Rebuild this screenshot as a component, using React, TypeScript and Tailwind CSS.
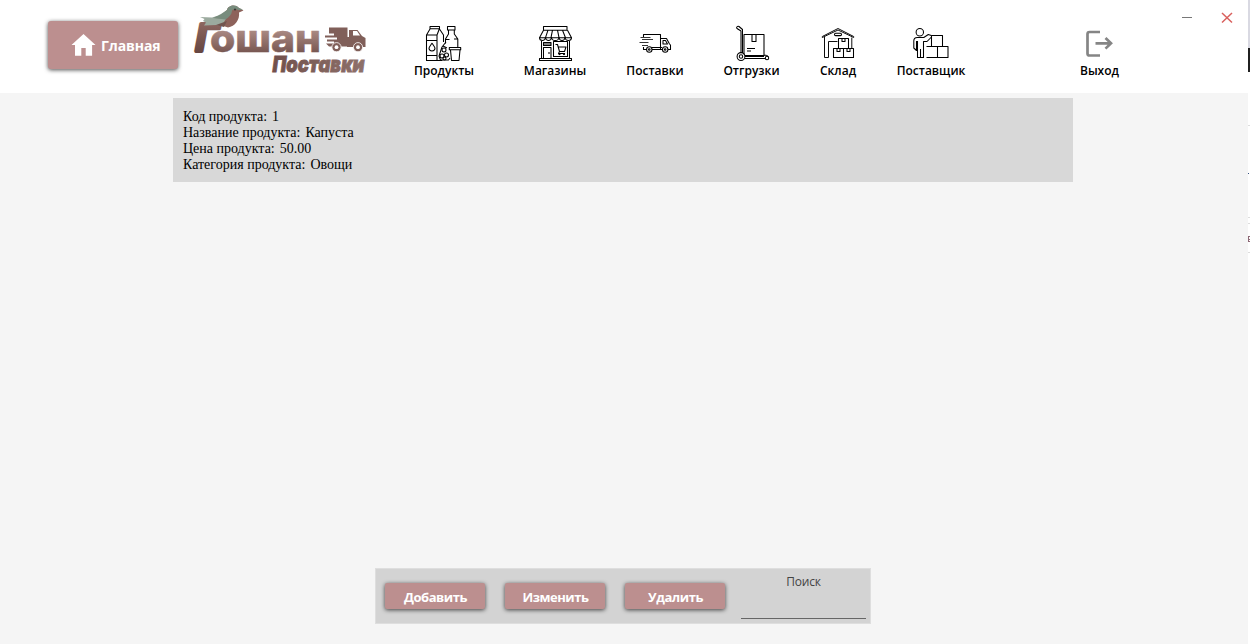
import React from "react";

type IconProps = { children: React.ReactNode };

function LineIcon({ children }: IconProps) {
  return (
    <svg className="h-10 w-10 shrink-0" viewBox="0 0 40 40" fill="none" stroke="#000" strokeWidth="1.05" strokeLinejoin="round">
      {children}
    </svg>
  );
}

const ProductsIcon = () => (
  <LineIcon>
    <path d="M6 3.5h9.5v2.3H6zM6 6L2.5 12v25.5h10.500V12H2.500M15.300 6l-2.300 6v25.500h5.300M15.500 6l4 6v7M2.500 17.500h10.500M2.500 32.500h10.500" />
    <path d="M8 20.300c-1.700 2.500-3 3.600-3 5a3 2.600 0 0 0 6 0c0-1.400-1.300-2.500-3-5z" />
    <path d="M23.500 3.500h7.500v3.500h-7.500zM24.500 7v4l-3 5v4.500M30.300 7v4l3.500 5v8M21.500 16.500h4M30 16h4" />
    <path d="M25.300 24.500h11.400v2.300H25.300zM26.500 27l1 10.500h7.500l1-10.500" />
    <path d="M22 19l-4 5-3 9 1.500 4h8l1.500-2M19 23l4 2" />
    <circle cx="20" cy="27" r="2" /><circle cx="18" cy="33" r="2" /><circle cx="22.500" cy="32" r="2" /><circle cx="20.500" cy="35.500" r="1.500" />
  </LineIcon>
);

const ShopIcon = () => (
  <LineIcon>
    <path d="M8.500 3.500h23.500v3.700H8.500zM8.500 7.200l-4 7.500h32l-4-7.500M13 7.200l-2.500 7.500M17.500 7.200l-1.500 7.500M22.500 7.200l1.500 7.500M27.500 7.200l3 7.500" />
    <path d="M4.500 14.500c0 4 5.500 4 6 0 .5 4 5.500 4 6 0 .5 4 7 4 7.500 0 .5 4 5.500 4 6 0 .5 4 6.500 4 6.500 0" />
    <path d="M6.500 18v17.500M34.500 18v17.500M4.500 35.500h32v2h-32zM8.500 19.500h7.500v3h-7.500zM8.500 21h7.500M8.500 24.500h7.500v11h-7.500zM18.500 18.500h14v15h-14z" />
    <path d="M20.500 21.500h2l2 7h5l1.500-4.500h-7.500M24.500 28.500l-1 2h6.500M14 29v2" />
    <circle cx="24.500" cy="31" r=".6" /><circle cx="29" cy="31" r=".6" />
  </LineIcon>
);

const TruckIcon = () => (
  <LineIcon>
    <path d="M8.500 14v-2.500h17v15H17M12 26.500H8.500V24M25.500 15.500h6l3 5.500 1 1v4.500h-2.500M25.500 26.500h2M28 17.500h2.500l2 3.500H28zM17 24.500h10" />
    <path d="M5.500 14.500h10M7 16.500h11M4.500 19.500h9M7 22.500h6" strokeWidth=".8" />
    <circle cx="14.300" cy="26.500" r="2.700" /><circle cx="14.300" cy="26.500" r=".8" />
    <circle cx="30.200" cy="26.500" r="2.700" /><circle cx="30.200" cy="26.500" r=".8" />
  </LineIcon>
);

const HandTruckIcon = () => (
  <LineIcon>
    <path d="M9 30V8L5 5.500c-1-1 .5-3 2-2l3.500 3V30M12 31.500v-20h20v21H13M20 11.500v7h4v-7M15 25.500h8M15 28h4M13 33.500h19M13 35.500h20M32 32c2 0 4 0 4 2" />
    <circle cx="9" cy="33.500" r="3.900" /><circle cx="9" cy="33.500" r="1.700" /><circle cx="35" cy="35" r="1.700" />
  </LineIcon>
);

const WarehouseIcon = () => (
  <LineIcon>
    <path d="M4.300 14.500v-1L20 5.500l15.700 8v1M4.300 14.500L20 7l15.700 7.500M6.500 14v20.500h4V18.500h9M33.800 14.500V25" strokeWidth=".95" />
    <rect x="16.500" y="10.300" width="7" height="2.300" rx="1.100" />
    <path d="M20.500 15.500h10v10h-10zM15.500 25.500h10v9h-10zM25.500 25.500h10v9h-10zM24 15.500v3h3v-3M19 25.500v3h3v-3M29 25.500v3h3v-3" />
  </LineIcon>
);

const SupplierIcon = () => (
  <LineIcon>
    <circle cx="8.800" cy="9.200" r="3.700" />
    <path d="M5.500 18v9.500l-2.700-2.500v-7c0-2.500 1-3.500 3.500-3.500h6.500l4.500-3 3 1M20.500 14l-4.500 4.500h-3.500V34.500h-6V18M9.500 26v8.500" />
    <path d="M20.500 12.500h11v11h-11zM15.500 23.500h11v11h-11M26.500 23.500h10.500v11H26.500z" />
  </LineIcon>
);

const nav = [
  { label: "Продукты", icon: ProductsIcon, width: "w-[110px]" },
  { label: "Магазины", icon: ShopIcon, width: "w-[112px]" },
  { label: "Поставки", icon: TruckIcon, width: "w-[88px]" },
  { label: "Отгрузки", icon: HandTruckIcon, width: "w-[105px]" },
  { label: "Склад", icon: WarehouseIcon, width: "w-[68px]" },
  { label: "Поставщик", icon: SupplierIcon, width: "w-[118px]" },
];

function Logo() {
  return (
    <svg className="ml-[15px] h-[78px] w-[176px] shrink-0" viewBox="0 0 176 78">
      <defs>
        <linearGradient id="letters" gradientUnits="userSpaceOnUse" x1="0" y1="28" x2="0" y2="54">
          <stop offset="0" stopColor="#b09089" />
          <stop offset="1" stopColor="#74534e" />
        </linearGradient>
        <linearGradient id="initial" gradientUnits="userSpaceOnUse" x1="0" y1="22" x2="0" y2="54">
          <stop offset="0" stopColor="#8d6761" />
          <stop offset="1" stopColor="#654540" />
        </linearGradient>
        <linearGradient id="subtitle" gradientUnits="userSpaceOnUse" x1="79" y1="0" x2="172" y2="0">
          <stop offset="0" stopColor="#71504b" />
          <stop offset="1" stopColor="#8e716b" />
        </linearGradient>
      </defs>
      <g fontFamily="Inter, sans-serif" fontWeight="800">
        <text x="2.500" y="51" fill="url(#initial)" fontFamily="Liberation Sans, sans-serif" fontWeight="700" fontStyle="italic" fontSize="38" textLength="23" lengthAdjust="spacingAndGlyphs" stroke="url(#initial)" strokeWidth="4" strokeLinejoin="round">Г</text>
        <text x="17" y="52" fill="url(#letters)" fontSize="38" textLength="111" lengthAdjust="spacingAndGlyphs" stroke="url(#letters)" strokeWidth=".5">ошан</text>
        <text x="79.500" y="71.500" fill="url(#subtitle)" fontSize="22" fontWeight="900" fontStyle="italic" textLength="92" lengthAdjust="spacingAndGlyphs" stroke="url(#subtitle)" strokeWidth=".9">Поставки</text>
      </g>
      <path d="M7 17l12 .5 5-1.500 11 4-2 6-10-1-12 .5 2-3-3-1.500 1.500-2z" fill="#9baa9e" />
      <path d="M22 18l6-3 6-5c1-5 9-6 12-2l4.500 2.500L46 12.500c1 7-4 14-11 15l-6-2 4-7z" fill="#8d625b" />
      <path d="M20 18l8-4 6-4c1-5 9-6 12-2l4 1.500-5 .8c-2-2-5-1.500-6 .7-.500 4-3 6-6.500 8.500z" fill="#788c7d" />
      <path d="M23 25l11-4-3 6z" fill="#71544e" />
      <circle cx="42" cy="9.500" r=".9" fill="#27342d" />
      <g fill="#805f59">
        <path d="M136 27.500h18.500v19H136l-3-3h8v-2h-7v-2h10v-2h-12v-2h9v-2h-5z" />
        <path d="M156 30h8.500l4.500 6 3.500 2v9H154V37h2z" />
        <path d="M160 31h4l3 4.500H160z" fill="#fff" />
        <circle cx="143.500" cy="47.200" r="4.600" stroke="#fff" strokeWidth=".8" /><circle cx="165" cy="47.200" r="4.600" stroke="#fff" strokeWidth=".8" />
        <circle cx="143.500" cy="47.200" r="1.900" fill="#fff" /><circle cx="165" cy="47.200" r="1.900" fill="#fff" />
      </g>
    </svg>
  );
}

function Header() {
  return (
    <header className="flex h-[93px] bg-white">
      <button className="mt-[21px] ml-12 flex h-12 w-[130px] shrink-0 items-center rounded-[3px] bg-[#bc8f8f] pl-[23px] text-[14px] font-bold text-white shadow-[0_1px_4px_0px_rgba(0,0,0,0.7)]">
        <svg className="mr-[5px] h-6 w-[25px]" viewBox="0 0 25 24" fill="#fff">
          <path d="M12.500 1L24.500 12h-3.400v10.700h-6.400V15h-4.400v7.700H4V12H.5z" />
        </svg>
        <span className="tracking-[-0.1px]">Главная</span>
      </button>
      <Logo />
      <nav className="ml-5 flex">
        {nav.map(({ label, icon: Icon, width }) => (
          <a key={label} className={`flex shrink-0 flex-col items-center pt-[23px] ${width}`}>
            <Icon />
            <span className="text-[12px] leading-4 font-semibold whitespace-nowrap">{label}</span>
          </a>
        ))}
      </nav>
      <a className="ml-[69px] flex w-[81px] flex-col items-center pt-[23px]">
        <svg className="h-10 w-10" viewBox="0 0 40 40" fill="none" stroke="#858585" strokeWidth="2.700">
          <path d="M20 9H9.500q-2 0-2 2v19.500q0 2 2 2H20M15.500 20.300h15.500M25.500 15l5.500 5.300-5.500 5.300" />
        </svg>
        <span className="text-[12px] leading-4 font-semibold">Выход</span>
      </a>
      <div className="ml-auto flex items-start pt-3 pr-[15px]">
        <svg className="h-3 w-3" viewBox="0 0 12 12" stroke="#777"><path d="M1 5.500h10" /></svg>
        <svg className="ml-7 h-3 w-3" viewBox="0 0 12 12" stroke="#d9605d" strokeWidth="1.500"><path d="M1 1l10 9.500M11 1L1 10.500" /></svg>
      </div>
    </header>
  );
}

const product = [
  ["Код продукта:", "1"],
  ["Название продукта:", "Капуста"],
  ["Цена продукта:", "50.00"],
  ["Категория продукта:", "Овощи"],
];

export default function App() {
  return (
    <div className="flex h-[644px] w-[1250px] overflow-hidden bg-[#f5f5f5] font-['Open_Sans',sans-serif] text-black">
      <div className="flex w-[1248px] shrink-0 flex-col">
        <Header />
        <section className="mt-[5px] ml-[173px] h-[84px] w-[900px] bg-[#d8d8d8] pt-[11px] pl-[10px] font-['Liberation_Serif',serif] text-[14px] leading-4">
          {product.map(([key, value]) => (
            <div key={key} className="flex gap-[5px]"><span>{key}</span><span>{value}</span></div>
          ))}
        </section>
        <footer className="mt-auto mb-5 ml-[375px] flex h-14 w-[496px] border border-[#dedede] bg-[#d3d3d3] pl-[9px]">
          <div className="flex gap-5 pt-[14px]">
            {["Добавить", "Изменить", "Удалить"].map((label) => (
              <button key={label} className="h-[26px] w-[100px] rounded-[2px] bg-[#bc8f8f] pt-px pl-px text-[13px] leading-[26px] font-bold tracking-[-0.45px] text-white shadow-[0_1px_4px_0px_rgba(0,0,0,0.7)]">
                {label}
              </button>
            ))}
          </div>
          <label className="ml-4 flex h-[50px] w-[125px] justify-center border-b border-[#666] pt-[5px] text-[12px] leading-4 tracking-[-0.2px] text-[#444]">Поиск</label>
        </footer>
      </div>
      <div className="flex w-[2px] flex-col bg-white">
        <div className="h-12 bg-[#d9d9e2]" />
        <div className="h-6 bg-[#202020]" />
        <div className="mt-[53px] h-px bg-[#ddd]" />
        <div className="mt-[47px] h-px w-px bg-[#365080]" />
        <div className="mt-[43px] h-px bg-[#ddd]" />
        <div className="mt-[5px] h-px bg-[#ddd]" />
        <div className="mt-3 flex h-[6px] flex-col justify-between border-l border-[#8d6875]">
          <div className="h-px bg-[#8d6875]" />
          <div className="h-px bg-[#8d6875]" />
          <div className="h-px bg-[#8d6875]" />
        </div>
        <div className="mt-[10px] h-px bg-[#ddd]" />
      </div>
    </div>
  );
}
